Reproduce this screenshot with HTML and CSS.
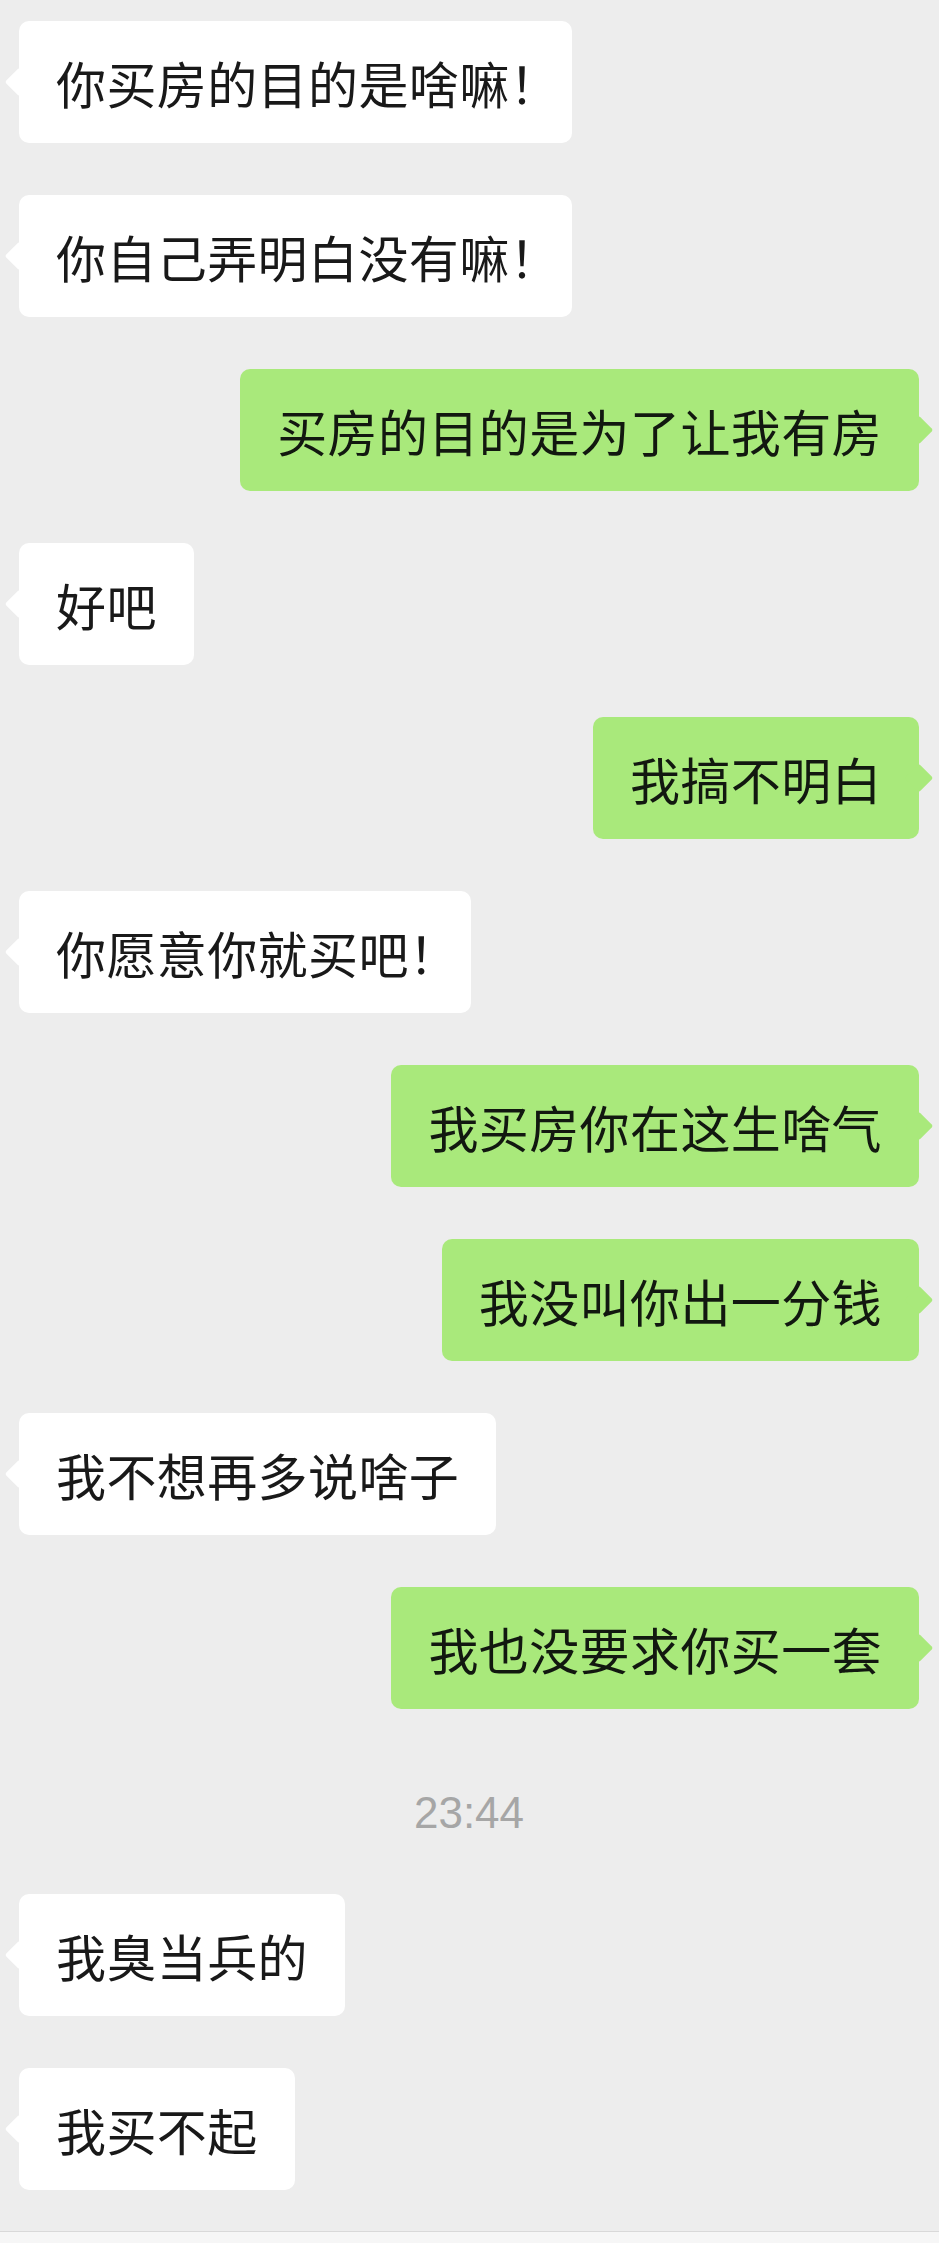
FILE: index.html
```html
<html>
    <head>
        <meta charset="utf-8">
        <title>聊天</title>
        <link rel="stylesheet" href="styles.css">
    </head>
    <body>
        <div class="chat">
            <div class="msg left"><div class="bubble">你买房的目的是啥嘛！</div></div>
            <div class="msg left"><div class="bubble">你自己弄明白没有嘛！</div></div>
            <div class="msg right"><div class="bubble">买房的目的是为了让我有房</div></div>
            <div class="msg left"><div class="bubble">好吧</div></div>
            <div class="msg right"><div class="bubble">我搞不明白</div></div>
            <div class="msg left"><div class="bubble">你愿意你就买吧！</div></div>
            <div class="msg right"><div class="bubble">我买房你在这生啥气</div></div>
            <div class="msg right"><div class="bubble">我没叫你出一分钱</div></div>
            <div class="msg left"><div class="bubble">我不想再多说啥子</div></div>
            <div class="msg right"><div class="bubble">我也没要求你买一套</div></div>
            <div class="time">23:44</div>
            <div class="msg left"><div class="bubble">我臭当兵的</div></div>
            <div class="msg left"><div class="bubble">我买不起</div></div>
        </div>
        <div class="input-bar"></div>
    </body>
</html>
```

FILE: styles.css
```css
html {
    background-color: #ededed;
}
body {
    margin: 0;
    background-color: #ededed;
    font-family: "Noto Sans CJK SC", "Noto Sans", sans-serif;
    color: #191919;
}
.chat {
    display: flex;
    flex-direction: column;
    gap: 52px;
    padding: 21px 20px 0 19px;
}
.msg {
    display: flex;
}
.msg.left {
    justify-content: flex-start;
}
.msg.right {
    justify-content: flex-end;
}
.bubble {
    position: relative;
    padding: 26px 37px;
    font-size: 50px;
    line-height: 70px;
    letter-spacing: 0.4px;
    font-feature-settings: "halt";
    border-radius: 10px;
    background-color: #ffffff;
    white-space: nowrap;
}
/* the little arrow on the side of each bubble */
.bubble:before {
    content: "";
    position: absolute;
    top: 51px;
    width: 20px;
    height: 20px;
    border-radius: 2px;
    background: inherit;
    transform: rotate(45deg);
}
.left .bubble:before {
    left: -10px;
}
.right .bubble {
    background-color: #a9e97b;
    color: #121810;
}
.right .bubble:before {
    right: -10px;
}
.time {
    height: 81px;
    box-sizing: border-box;
    padding-top: 30px;
    text-align: center;
    font-family: "Liberation Sans", Arial, sans-serif;
    font-size: 44px;
    line-height: 44px;
    color: #a6a6a6;
}
.input-bar {
    margin-top: 41px;
    height: 11px;
    border-top: 1px solid #d9d9d9;
    background-color: #f6f6f6;
}
```
